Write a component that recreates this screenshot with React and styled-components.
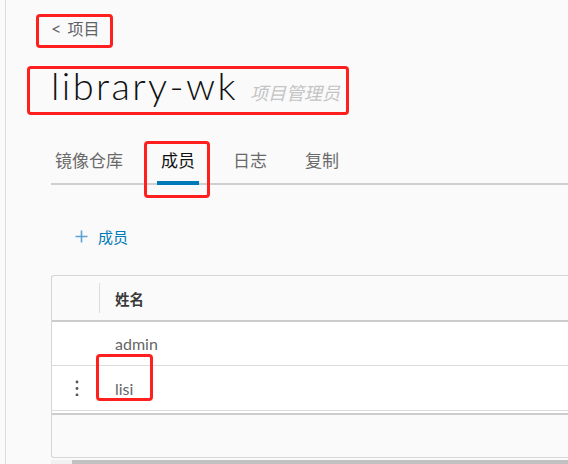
import styled, { createGlobalStyle } from "styled-components"

const GlobalStyle = createGlobalStyle`
  html, body {
    margin: 0;
    padding: 0;
    background: #fafafa;
    overflow: hidden;
  }
  body {
    font-family: Lato, "Noto Sans CJK SC", sans-serif;
  }
`

const red = "#ff1f1f"
const blue = "#0079b8"

const Page = styled.div`
  height: 464px;
  padding-left: 5px;
  overflow: hidden;
`

const Content = styled.main`
  height: 100%;
  border-left: 1px solid #dcdcdc;
  padding-left: 45px;
  box-sizing: border-box;
  overflow: hidden;
`

const Marked = styled.span`
  position: relative;
  display: inline-flex;
  align-items: baseline;
`

// red annotation frame drawn over the screenshot
const Annotation = styled.span`
  position: absolute;
  top: ${(p) => p.$t}px;
  left: ${(p) => p.$l}px;
  right: ${(p) => p.$r}px;
  bottom: ${(p) => p.$b}px;
  border: 3px solid ${red};
  border-radius: 4px;
  pointer-events: none;
`

const Breadcrumb = styled.div`
  padding-top: 18px;
  height: 22px;
  font-size: 16px;
  line-height: 20px;
  color: #5f6368;
`

const Chevron = styled.span`
  font-size: 18px;
  margin-right: 6px;
`

const TitleRow = styled.div`
  margin-top: 23px;
  height: 44px;
`

const Title = styled.h1`
  margin: 0;
  font-size: 38px;
  font-weight: 300;
  line-height: 44px;
  color: #111;
  letter-spacing: 2.4px;
`

const Role = styled.span`
  margin-left: 12px;
  font-size: 18px;
  font-style: italic;
  color: #c4c4c4;
`

const TabBar = styled.nav`
  margin-top: 32px;
  display: flex;
  gap: 30px;
  border-bottom: 2px solid #cfcfcf;
  height: 44px;
`

const Tab = styled.div`
  position: relative;
  padding: 0 4px;
  font-size: 17px;
  line-height: 44px;
  color: ${(p) => (p.$active ? "#111" : "#6a6a6a")};

  &::after {
    content: "";
    display: ${(p) => (p.$active ? "block" : "none")};
    position: absolute;
    left: 0;
    right: 0;
    bottom: -2px;
    height: 4px;
    background: ${blue};
  }
`

const AddButton = styled.button`
  margin: 41px 0 0 24px;
  display: flex;
  align-items: center;
  gap: 10px;
  border: none;
  background: none;
  padding: 0;
  font-family: inherit;
  font-size: 15px;
  color: ${blue};
  height: 20px;
`

const Table = styled.div`
  margin-top: 29px;
  width: 560px;
  border: 1px solid #d6d6d6;
  border-right: none;
  border-radius: 3px 0 0 3px;
  background: #fafafa;
`

const HeaderRow = styled.div`
  display: flex;
  align-items: center;
  height: 44px;
  border-bottom: 2px solid #cccccc;
`

const Row = styled.div`
  display: flex;
  align-items: center;
  height: ${(p) => p.$h}px;
  background: #fff;
  border-bottom: 1px solid #dcdcdc;
`

const ActionCell = styled.div`
  width: 47px;
  align-self: stretch;
  display: flex;
  align-items: center;
  justify-content: center;
  position: relative;
  left: 1px;
`

const Divider = styled.div`
  width: 1px;
  height: 30px;
  background: #dcdcdc;
`

const HeadCell = styled.div`
  padding-left: 15px;
  font-size: 14.5px;
  font-weight: 700;
  color: #3a3a3a;
`

const Cell = styled.div`
  padding-left: 16px;
  font-size: 16px;
  color: #666;
`

const Gap = styled.div`
  height: 2px;
  background: #fff;
  border-bottom: 2px solid #cccccc;
`

const Footer = styled.div`
  height: 42px;
`

const ScrollTrack = styled.div`
  margin-top: 2px;
  width: 560px;
  height: 6px;
  background: #f1f1f1;
  padding-left: 21px;
  box-sizing: border-box;
`

const ScrollThumb = styled.div`
  height: 100%;
  background: #c1c1c1;
`

const PlusIcon = () => (
  <svg width="13" height="13" viewBox="0 0 13 13">
    <path d="M6.5 0.5v12M0.5 6.5h12" stroke="#5ea3d2" strokeWidth="1.6" fill="none" />
  </svg>
)

const DotsIcon = () => (
  <svg width="4" height="16" viewBox="0 0 4 16">
    <circle cx="2" cy="2" r="1.4" fill="#555" />
    <circle cx="2" cy="8.5" r="1.4" fill="#555" />
    <circle cx="2" cy="15" r="1.4" fill="#555" />
  </svg>
)

const tabs = ["镜像仓库", "成员", "日志", "复制"]

export default function App() {
  return (
    <>
      <GlobalStyle />
      <Page>
        <Content>
          <Breadcrumb>
            <Marked>
              <Chevron>&lt;</Chevron>项目
              <Annotation $t={-4} $l={-15} $r={-14} $b={-9} />
            </Marked>
          </Breadcrumb>

          <TitleRow>
            <Marked>
              <Title>library-wk</Title>
              <Role>项目管理员</Role>
              <Annotation $t={3} $l={-24} $r={-9} $b={-8} />
            </Marked>
          </TitleRow>

          <TabBar>
            {tabs.map((t) => (
              <Tab key={t} $active={t === "成员"}>
                {t}
                {t === "成员" && <Annotation $t={2} $l={-13} $r={-11} $b={-15} />}
              </Tab>
            ))}
          </TabBar>

          <AddButton>
            <PlusIcon />
            成员
          </AddButton>

          <Table>
            <HeaderRow>
              <ActionCell />
              <Divider />
              <HeadCell>姓名</HeadCell>
            </HeaderRow>
            <Row $h={43}>
              <ActionCell />
              <Cell>admin</Cell>
            </Row>
            <Row $h={44}>
              <ActionCell>
                <DotsIcon />
              </ActionCell>
              <Cell>
                <Marked>
                  lisi
                  <Annotation $t={-25} $l={-19} $r={-20} $b={-3} />
                </Marked>
              </Cell>
            </Row>
            <Gap />
            <Footer />
          </Table>
          <ScrollTrack>
            <ScrollThumb />
          </ScrollTrack>
        </Content>
      </Page>
    </>
  )
}
